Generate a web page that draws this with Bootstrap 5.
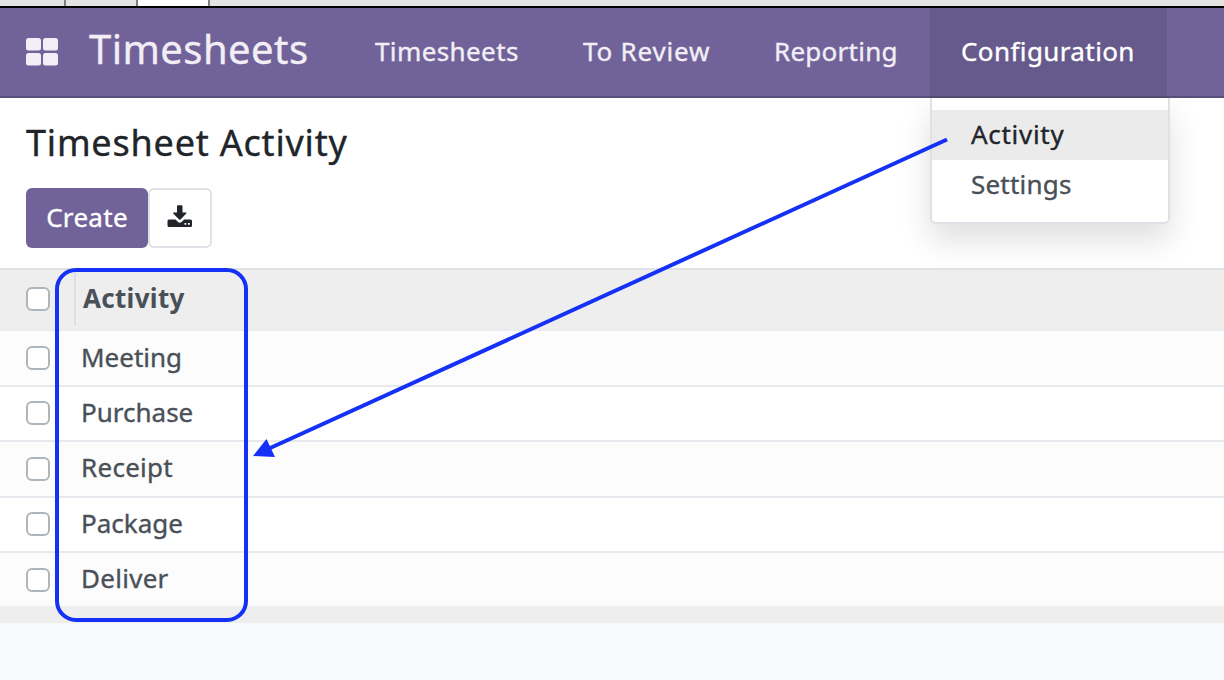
<!DOCTYPE html>
<html lang="en">
<head>
<meta charset="utf-8">
<meta name="viewport" content="width=device-width, initial-scale=1">
<title>Timesheet Activity</title>
<link href="https://cdn.jsdelivr.net/npm/bootstrap@5.3.0/dist/css/bootstrap.min.css" rel="stylesheet">
<style>
body{font-family:"Noto Sans","Open Sans",sans-serif;font-size:26px;line-height:36px;color:#495057;background:#f8f9fb;height:680px;overflow:hidden;-webkit-text-stroke:.35px currentColor}
.tabstrip{height:8px;background:#e3e3e3;border-bottom:2px solid #000}
.tabstrip span{border-right:2px solid #808080}
.topbar{height:90px;background:#71639a;border-bottom:2px solid #5a4f7b;color:#f1eff5;padding:0 0 0 26px}
.apps{margin-right:31px}
.brand-name{font-size:40px;width:254px;line-height:82px;letter-spacing:.45px;padding-bottom:6px}
.menu-item{padding-left:32px;height:88px;line-height:87px;white-space:nowrap;letter-spacing:.4px;flex:none}
.item-sheets{width:208px}
.item-review{width:191px;letter-spacing:.8px}
.item-report{width:188px;letter-spacing:.25px}
.item-config{width:237px;padding-left:31px}
.menu-item.active{background:#665a8c;color:#fff;height:90px;border-bottom:2px solid #534a72;align-self:flex-start}
.submenu{top:90px;left:0;width:240px;height:126px;background:#fff;border:2px solid #dee2e6;border-top:0;border-radius:0 0 6px 6px;padding-top:12px;box-shadow:0 16px 32px rgba(0,0,0,.13);clip-path:inset(0 -60px -60px -60px);line-height:48px;letter-spacing:.2px}
.submenu a{display:block;height:50px;padding-left:39px;color:#495057;text-decoration:none}
.submenu a.active{background:#ebebeb;color:#212529;letter-spacing:.7px}
.control{height:170px;padding:20px 26px 0;background:#fff}
.control h1{font-size:36px;line-height:50px;color:#212529;margin:0 0 20px;font-weight:400;letter-spacing:.8px}
.btn-create{width:122px;height:60px;border:0;border-radius:6px;background:#71639a!important;color:#fff!important;font-size:26px;padding:0 0 2px;letter-spacing:.3px}
.btn-export{width:64px;height:60px;border:2px solid #dee2e6;border-radius:6px;background:#fff;padding:0 0 2px}
.list-head{height:63px;background:#eee;border-top:2px solid #dee2e6;border-bottom:2px solid #e9ebf0;font-weight:700;-webkit-text-stroke:0;letter-spacing:.3px}
.line{background:#fff;border-bottom:2px solid #e8e9ee}
.line:nth-child(even){background:#fcfcfc}
.form-check-input.tick{width:24px;height:24px;border:2px solid #adb5bd;border-radius:6px;margin:0 0 0 26px;flex:none}
.list-head .form-check-input.tick,.line:nth-child(odd) .form-check-input.tick{margin-bottom:2px}
.list-label{margin-left:31px;padding-bottom:3px}
.label-open{letter-spacing:.28px}
.list-head .list-label{border-left:2px solid #dfe0e1;margin-left:24px;height:53px;line-height:50px;padding-left:7px}
.foot{height:17px;background:#eee}
.notes{left:0;top:0;pointer-events:none;z-index:5}
</style>
</head>
<body>
<div class="tabstrip d-flex"><span style="width:66px"></span><span style="width:72px"></span><span class="bg-white" style="width:72px"></span></div>
<nav class="topbar d-flex align-items-center">
  <svg class="apps" width="32" height="28" fill="#f1eff5"><rect width="15" height="12.500" rx="2.500"/><rect x="17" width="15" height="12.500" rx="2.500"/><rect y="15" width="15" height="12.500" rx="2.500"/><rect x="17" y="15" width="15" height="12.500" rx="2.500"/></svg>
  <span class="brand-name text-nowrap">Timesheets</span>
  <span class="menu-item item-sheets">Timesheets</span>
  <span class="menu-item item-review">To Review</span>
  <span class="menu-item item-report">Reporting</span>
  <div class="menu-item item-config active position-relative">Configuration
    <div class="submenu position-absolute"><a class="active" href="#">Activity</a><a href="#">Settings</a></div>
  </div>
</nav>
<header class="control">
  <h1>Timesheet Activity</h1>
  <div class="d-flex">
    <button class="btn btn-create">Create</button>
    <button class="btn btn-export d-flex align-items-center justify-content-center" aria-label="Export"><svg width="26" height="24" viewBox="0 0 26 24" fill="#212529"><path d="M10 1.200Q10 .2 11 .2h3.500q1 0 1 1V7.500h3.300q1.200 0 .5 1L13.500 14.500q-.7.700-1.400 0L6.200 8.500q-.7-1 .5-1H10z"/><path d="M2 14.500h6.500l2.600 2.400q1.700 1.500 3.400 0l2.600-2.400H23.500q1.500 0 1.500 1.500v4.600q0 1.500-1.500 1.500H2q-1.500 0-1.500-1.500V16q0-1.500 1.500-1.500z"/><path fill="#fff" d="M17.500 18h1.800v1.800h-1.800zM21 18h1.800v1.800H21z"/></svg></button>
  </div>
</header>
<main>
  <div class="list-head d-flex align-items-center"><input class="form-check-input tick" type="checkbox"><span class="list-label">Activity</span></div>
  <div class="line d-flex align-items-center" style="height:56px"><input class="form-check-input tick" type="checkbox"><span class="list-label">Meeting</span></div>
  <div class="line d-flex align-items-center" style="height:55px"><input class="form-check-input tick" type="checkbox"><span class="list-label">Purchase</span></div>
  <div class="line d-flex align-items-center" style="height:56px"><input class="form-check-input tick" type="checkbox"><span class="list-label label-open pb-1">Receipt</span></div>
  <div class="line d-flex align-items-center" style="height:55px"><input class="form-check-input tick" type="checkbox"><span class="list-label">Package</span></div>
  <div class="line d-flex align-items-center border-bottom-0" style="height:53px"><input class="form-check-input tick" type="checkbox"><span class="list-label label-open">Deliver</span></div>
  <div class="foot"></div>
</main>
<svg class="notes position-absolute" width="1224" height="680" fill="none" stroke="#1531f5" stroke-width="4"><rect x="57" y="270" width="189" height="350" rx="19"/><path d="M947 139.500 268 449"/><path fill="#1531f5" stroke="none" d="M253 456 266.500 439 275 457z"/></svg>
<script src="https://cdn.jsdelivr.net/npm/bootstrap@5.3.0/dist/js/bootstrap.bundle.min.js"></script>
</body>
</html>
